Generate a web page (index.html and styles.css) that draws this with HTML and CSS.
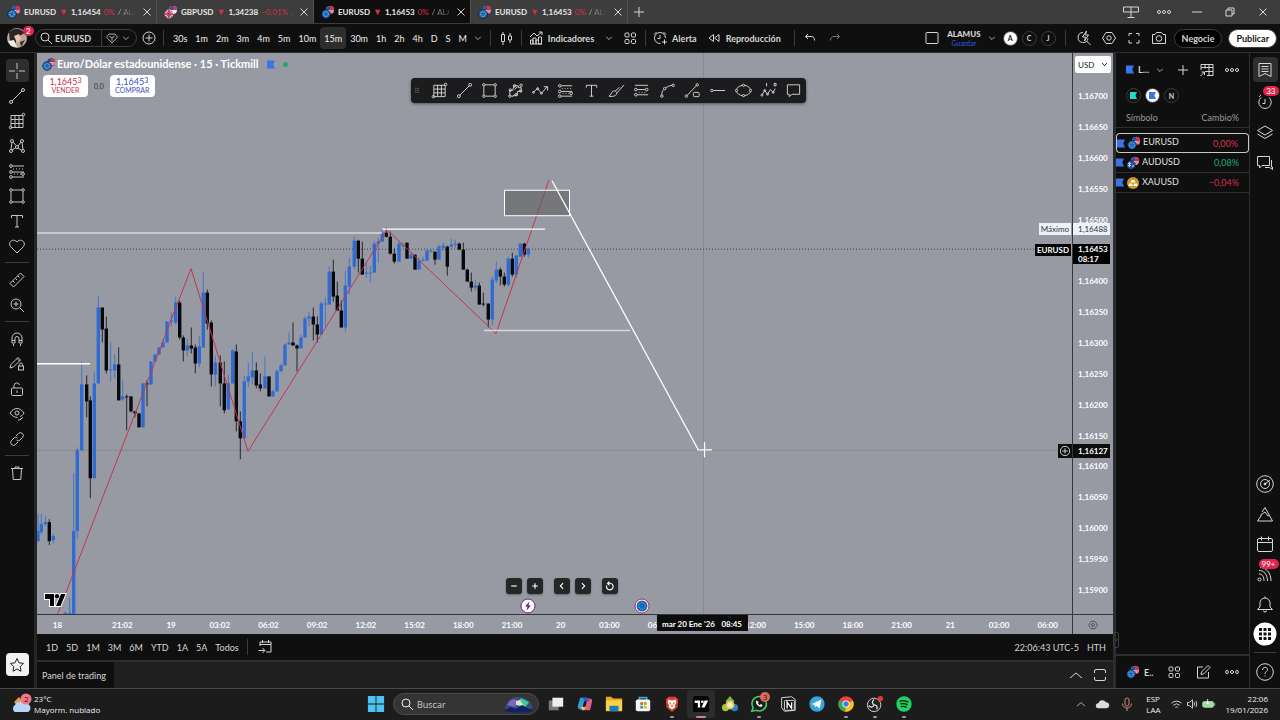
FILE: index.html
```html
<!DOCTYPE html>
<html lang="es">
<head>
    <meta charset="UTF-8">
    <meta name="viewport" content="width=device-width, initial-scale=1.0">
    <title>EURUSD 1,16453</title>
    <link rel="stylesheet" href="styles.css">
</head>
<body>
    <!-- Icon sprite -->
    <svg class="sprite" aria-hidden="true">
        <symbol id="pair-eu" viewBox="0 0 14 14"><circle cx="9" cy="5" r="4" fill="#e8e8f0"/><path d="M9 1a4 4 0 0 1 4 4H9zM8 7h5M7 8.5h5" fill="#c8374f" stroke="#c8374f" stroke-width="1"/><path d="M5 5a4 4 0 0 1 4-4v4z" fill="#2d4fa5"/><circle cx="5" cy="9" r="4.4" fill="#1c66b4" stroke="#0f0f0f" stroke-width=".5"/><circle cx="5" cy="9" r="2.4" fill="none" stroke="#9fd0ee" stroke-width="1" stroke-dasharray="1 .9"/></symbol>
        <symbol id="pair-gb" viewBox="0 0 14 14"><circle cx="9" cy="5" r="4" fill="#e8e8f0"/><path d="M9 1a4 4 0 0 1 4 4H9z" fill="#c8374f"/><path d="M5 5a4 4 0 0 1 4-4v4z" fill="#2d4fa5"/><circle cx="5" cy="9" r="4.4" fill="#e3b7c4"/><path d="M5 5v8M1 9h8" stroke="#c9304d" stroke-width="1.6"/><path d="M2 6l6 6M8 6l-6 6" stroke="#a23a60" stroke-width=".8"/></symbol>
        <symbol id="pair-au" viewBox="0 0 14 14"><circle cx="9" cy="5" r="4" fill="#e8e8f0"/><path d="M9 1a4 4 0 0 1 4 4H9zM8 7h5" fill="#c8374f" stroke="#c8374f"/><path d="M5 5a4 4 0 0 1 4-4v4z" fill="#2d4fa5"/><circle cx="5" cy="9" r="4.4" fill="#2b529b" stroke="#0f0f0f" stroke-width=".5"/><path d="M2 7l3 3M5 7l-3 3M3.500 6v5" stroke="#eee" stroke-width=".8"/><circle cx="7" cy="10" r=".8" fill="#fff"/></symbol>
        <symbol id="gold" viewBox="0 0 14 14"><circle cx="7" cy="7" r="6" fill="#c9972b"/><path d="M5.500 4h3l1 2.500h-5zM3 7.500h3l.8 2.500H2.200zM8 7.500h3l.8 2.500H7.200z" fill="#fff6dc"/></symbol>
        <symbol id="flag" viewBox="0 0 9 9"><path d="M0 0h9L7 4.500 9 9H0z" fill="currentColor" stroke="none"/></symbol>
        <symbol id="x" viewBox="0 0 18 18"><path d="M5.500 5.500l7 7M12.500 5.500l-7 7"/></symbol>
        <symbol id="plus" viewBox="0 0 18 18"><path d="M9 4v10M4 9h10"/></symbol>
        <symbol id="minus" viewBox="0 0 18 18"><path d="M4 9h10"/></symbol>
        <symbol id="down" viewBox="0 0 18 18"><path d="M5.500 7.500L9 11l3.500-3.500"/></symbol>
        <symbol id="up" viewBox="0 0 18 18"><path d="M3 12l6-5 6 5"/></symbol>
        <symbol id="left" viewBox="0 0 18 18"><path d="M11 4L6 9l5 5"/></symbol>
        <symbol id="right" viewBox="0 0 18 18"><path d="M7 4l5 5-5 5"/></symbol>
        <symbol id="search" viewBox="0 0 18 18"><circle cx="8" cy="8" r="4"/><path d="M11 11l4 4"/></symbol>
        <symbol id="gem" viewBox="0 0 18 18"><path d="M5 4h8l3 4-7 7.500L2 8zM5.500 7.500H7.500L9 9.500l1.500-2h2M9 9.500V13"/></symbol>
        <symbol id="circle-plus" viewBox="0 0 18 18"><circle cx="9" cy="9" r="6"/><path d="M9 5.500v7M5.500 9h7"/></symbol>
        <symbol id="candles" viewBox="0 0 18 18"><path d="M4.500 5.500h3v7h-3zM6 3v2.500M6 12.500V16M11.500 7h3v4h-3zM13 4v3M13 11v3"/></symbol>
        <symbol id="indicators" viewBox="0 0 18 18"><path d="M3.500 15v-4h2.500v4M6 15V9h3v6M9 15v-4h2.500v4M11.500 15V8h3v7zM3 15h12M3 8l4-4 3 3 5-4M12 3h3v3"/></symbol>
        <symbol id="grid" viewBox="0 0 18 18"><rect x="4" y="4" width="4" height="4" rx="1"/><rect x="10.500" y="4" width="4" height="4" rx="1"/><rect x="4" y="10.500" width="4" height="4" rx="1"/><rect x="10.500" y="10.500" width="4" height="4" rx="1"/></symbol>
        <symbol id="alarm" viewBox="0 0 18 18"><path d="M9.500 14.500A5.500 5.500 0 1 1 14.500 9M9 6v3.500H6.500M3 5.500L5.500 3M12.500 3L15 5.500M13.500 10.500v5M11 13h5"/></symbol>
        <symbol id="replay" viewBox="0 0 18 18"><path d="M8.500 5.500v7L4 9zM14 5.500v7L9.500 9z"/></symbol>
        <symbol id="undo" viewBox="0 0 18 18"><path d="M7 5L4.500 7.500 7 10M4.500 7.500H10c2.500 0 3.500 1.500 3.500 4"/></symbol>
        <symbol id="redo" viewBox="0 0 18 18"><path d="M11 5l2.500 2.500L11 10M13.500 7.500H8c-2.500 0-3.500 1.500-3.500 4"/></symbol>
        <symbol id="square" viewBox="0 0 18 18"><rect x="3" y="3.500" width="12" height="11" rx="1"/></symbol>
        <symbol id="quick" viewBox="0 0 18 18"><path d="M8 3.500a5 5 0 1 0 5 6M11.500 12l4 4M11.500 2L7.500 8h3l-1 4 4-6h-3z"/></symbol>
        <symbol id="hex" viewBox="0 0 18 18"><path d="M6 3.500h6l3.500 5.500-3.500 5.500H6L2.500 9z"/><circle cx="9" cy="9" r="2.200"/></symbol>
        <symbol id="full" viewBox="0 0 18 18"><path d="M4 7V4.500h3M11 4.500h3V7M14 11v3h-3M7 14H4v-3"/></symbol>
        <symbol id="camera" viewBox="0 0 18 18"><path d="M2.500 5.500H5L6.500 3.500h5L13 5.500h2.500v9h-13z"/><circle cx="9" cy="9.500" r="2.800"/></symbol>
        <symbol id="cross" viewBox="0 0 18 18"><path d="M9 1v6M9 11v6M1 9h6M11 9h6M8.700 9h.6"/></symbol>
        <symbol id="trend" viewBox="0 0 18 18"><circle cx="3" cy="15" r="1.500"/><circle cx="15" cy="3" r="1.500"/><path d="M4 14L14 4"/></symbol>
        <symbol id="gann" viewBox="0 0 18 18"><path d="M3 3.500h12v12H3zM7 3v12M11 3v12M3 7.500h12M3 11.500h12"/><circle cx="2.500" cy="15.500" r="1.300"/><circle cx="15.500" cy="2.500" r="1.300"/></symbol>
        <symbol id="pattern" viewBox="0 0 18 18"><circle cx="4" cy="4" r="1.500"/><circle cx="3" cy="14" r="1.500"/><circle cx="9" cy="10" r="1.500"/><circle cx="14" cy="4" r="1.500"/><circle cx="15" cy="14" r="1.500"/><path d="M4 5.500L3 12.500M5 5l3.500 4M10 9l3-4M14 5.500l1 7M4 13l4-2.500M10 11l4 2.500"/></symbol>
        <symbol id="fib" viewBox="0 0 18 18"><circle cx="3" cy="4" r="1.400"/><circle cx="3" cy="10" r="1.400"/><circle cx="3" cy="15" r="1.400"/><circle cx="15" cy="12" r="1.400"/><path d="M4.500 4H16M4.500 10H16M4.500 15H16"/><path d="M5 7h10M6 12h7" stroke-dasharray="1 2"/></symbol>
        <symbol id="extension" viewBox="0 0 18 18"><circle cx="3" cy="8" r="1.400"/><circle cx="14.500" cy="8" r="1.400"/><circle cx="3" cy="13.500" r="1.400"/><path d="M2 3.500h14M4.500 8H13M4.500 13.500H16"/><path d="M6 11h8" stroke-dasharray="1 2"/></symbol>
        <symbol id="rect" viewBox="0 0 18 18"><path d="M3 4.500v9M15 4.500v9M4.500 3h9M4.500 15h9"/><circle cx="3" cy="3" r="1.300"/><circle cx="15" cy="3" r="1.300"/><circle cx="3" cy="15" r="1.300"/><circle cx="15" cy="15" r="1.300"/></symbol>
        <symbol id="text" viewBox="0 0 18 18"><path d="M3.500 6V3.500h11V6M9 3.500V15M7 15h4"/></symbol>
        <symbol id="heart" viewBox="0 0 18 18"><path d="M9 16L2.500 9.500c-3-4 2.500-9 6.500-4.500 4-4.500 9.500.5 6.500 4.500z"/></symbol>
        <symbol id="ruler" viewBox="0 0 18 18"><path d="M2 12.500L12.500 2 16 5.500 5.500 16zM5 10l1.500 1.500M7.500 7.500L9 9M10 5l1.500 1.500"/></symbol>
        <symbol id="zoom-in" viewBox="0 0 18 18"><circle cx="8" cy="8" r="5"/><path d="M12 12l4 4M8 5.500v5M5.500 8h5"/></symbol>
        <symbol id="magnet" viewBox="0 0 18 18"><path d="M4 13V8a5 5 0 0 1 10 0v5h-3V8.500a2 2 0 0 0-4 0V13zM4 10.500h3M11 10.500h3M5.500 14v2M12.500 14v2"/></symbol>
        <symbol id="pen-lock" viewBox="0 0 18 18"><path d="M2 13L3 9.500 10 2.500l2.500 2.500-7 7zM9 3.500L11.500 6"/><rect x="10.500" y="11" width="5" height="4"/><path d="M11.500 11V9.500a1.500 1.500 0 0 1 3 0V11"/></symbol>
        <symbol id="lock" viewBox="0 0 18 18"><rect x="3.500" y="8" width="11" height="7.500" rx="1"/><path d="M6 8V5.500a2.800 2.800 0 0 1 5.500-.5M9 10.500v2.500"/></symbol>
        <symbol id="eye" viewBox="0 0 18 18"><path d="M2 8c4-6 10-6 14 0-1 2-2.500 3-4 3.500M2 8c2 3 5 4.500 7.500 4.500"/><circle cx="9" cy="8" r="2"/><path d="M10 15c2 .5 3-1.500 5-2.500M12 15l2-2"/></symbol>
        <symbol id="link" viewBox="0 0 18 18"><path d="M8 6l2.500-2.500a2.800 2.800 0 0 1 4 4L12 10c-1 1-2.500 1-3.500 0M10 12l-2.500 2.500a2.800 2.800 0 0 1-4-4L6 8c1-1 2.500-1 3.500 0"/></symbol>
        <symbol id="trash" viewBox="0 0 18 18"><path d="M3 4.500h12M7 4.500V3h4v1.500M4.500 4.500l.7 11h7.600l.7-11"/></symbol>
        <symbol id="star" viewBox="0 0 18 18"><path d="M9 2.500l2 4.300 4.500.6-3.300 3.200.8 4.700L9 13l-4 2.300.8-4.700-3.300-3.200 4.500-.6z"/></symbol>
        <symbol id="nodes" viewBox="0 0 18 18"><path d="M3 14.500V9h3l1.500-5H12v2h3v4h-4v4H7v1H4.500M8 8l3-3"/><circle cx="3" cy="15" r="1.300"/><circle cx="3.500" cy="8.500" r="1.300"/><circle cx="8" cy="4" r="1.300"/><circle cx="15" cy="3.500" r="1.300"/><circle cx="14.500" cy="9.500" r="1.300"/><circle cx="9.500" cy="13.500" r="1.300"/></symbol>
        <symbol id="zigzag" viewBox="0 0 18 18"><path d="M1 11l5-4 4 5 6-7M12.500 5H16.500V9"/><circle cx="1.500" cy="11" r="1"/><circle cx="6" cy="7" r="1"/><circle cx="10" cy="12" r="1"/></symbol>
        <symbol id="brush" viewBox="0 0 18 18"><path d="M1 15c2 0 2-4 4.500-5.500 2-.8 4.500 1.500 3.500 3.500-1 2-5 3-8 2zM8 9.500L12 5.500M9.500 11.500L17 3"/></symbol>
        <symbol id="curve" viewBox="0 0 18 18"><path d="M3 14c0-3 .5-4.500 2-6M7 6.500c2-2 4-2.500 7-3"/><circle cx="3" cy="15" r="1.300"/><circle cx="6" cy="7" r="1.300"/><circle cx="15" cy="3.500" r="1.300"/></symbol>
        <symbol id="trend-lock" viewBox="0 0 18 18"><circle cx="2.500" cy="15" r="1.300"/><circle cx="14" cy="3" r="1.300"/><path d="M3.500 14l9.500-10"/><rect x="10" y="11" width="6" height="4.500" rx="1"/></symbol>
        <symbol id="ray" viewBox="0 0 18 18"><circle cx="3" cy="9" r="1.300"/><path d="M4.500 9H17"/></symbol>
        <symbol id="ellipse" viewBox="0 0 18 18"><ellipse cx="9" cy="9" rx="7.500" ry="5.500"/><circle cx="1.500" cy="9" r="1.200" fill="#1c1c1e"/><circle cx="16.500" cy="9" r="1.200" fill="#1c1c1e"/><circle cx="9" cy="3.500" r="1.200" fill="#1c1c1e"/><circle cx="9" cy="14.500" r="1.200" fill="#1c1c1e"/></symbol>
        <symbol id="elliott" viewBox="0 0 18 18"><path d="M2 14l3-5 3 4 3-5 3 3 2-4M7 1v3.500M15 1.500v2.500h2v-2.500z"/><circle cx="2" cy="14" r="1"/><circle cx="5" cy="9" r="1"/><circle cx="8" cy="13" r="1"/><circle cx="14" cy="11" r="1"/></symbol>
        <symbol id="note" viewBox="0 0 18 18"><path d="M2.500 3h13v10H7.500L4.500 15.500V13h-2z"/></symbol>
        <symbol id="dots" viewBox="0 0 18 18"><circle cx="4" cy="9" r="1.500"/><circle cx="9" cy="9" r="1.500"/><circle cx="14" cy="9" r="1.500"/></symbol>
        <symbol id="table" viewBox="0 0 18 18"><path d="M3 9V3.500h12v11H9M3 6.500h12M7 3.500v4M11 3.500v11M7 10.500h8M2.500 15l4-4M3.500 11h3v3"/></symbol>
        <symbol id="watch" viewBox="0 0 18 18"><path d="M3 2.500h12v13l-6-3-6 3zM5.500 5.500h7M5.500 8h7M5.500 10.500h7"/></symbol>
        <symbol id="clock" viewBox="0 0 18 18"><path d="M13 5.500A6.200 6.200 0 1 1 5 5.500M9 7v4.500H6.500M3 5l2-2"/></symbol>
        <symbol id="layers" viewBox="0 0 18 18"><path d="M9 3l7.500 4.500-7.500 4.500-7.500-4.500zM1.500 11l7.500 4.500 7.500-4.500"/></symbol>
        <symbol id="chat" viewBox="0 0 18 18"><path d="M1.500 2.500h12v9H6L3.500 14v-2.500h-2zM15.500 6v7h1v2.500L13.500 13.500H9"/></symbol>
        <symbol id="target" viewBox="0 0 18 18"><circle cx="9" cy="9" r="8.300"/><circle cx="9" cy="9" r="4.500"/><path d="M9 9l5-4"/><circle cx="9" cy="9" r="1" fill="currentColor"/></symbol>
        <symbol id="peak" viewBox="0 0 18 18"><path d="M1.500 16h15L9 2.500 6 7M1.500 16l4-6M4.500 10l4.500-3 3 4 1.500-.5"/></symbol>
        <symbol id="calendar" viewBox="0 0 18 18"><rect x="1.500" y="3.500" width="15" height="13" rx="1.500"/><path d="M1.500 7.500h15M5.500 1.500v4M12.500 1.500v4"/></symbol>
        <symbol id="feed" viewBox="0 0 18 18"><path d="M3 9c3 0 5 2 5 7M3 5.500c5 0 8.500 4 8.500 10.500M4 2.500c6 0 11 5 11 13.500"/><circle cx="3.500" cy="14.500" r="1.500"/></symbol>
        <symbol id="bell" viewBox="0 0 18 18"><path d="M1.500 14.500h15l-2.500-2.500V8A5 5 0 0 0 4 8v4zM7.500 15.500a1.500 1.500 0 0 0 3 0M9 1.500V3"/></symbol>
        <symbol id="help" viewBox="0 0 18 18"><circle cx="9" cy="9" r="8.300"/><path d="M6.500 7c0-3.500 5-3.500 5-.5C11.500 8.500 9 8.500 9 11M9 12.500v1"/></symbol>
        <symbol id="goto" viewBox="0 0 18 18"><path d="M4 8V4h11v10H10M4 6.500h11M6.500 2v3M12.500 2v3M2.500 12.500h6M6.500 10l2.500 2.500L6.500 15"/></symbol>
        <symbol id="edit" viewBox="0 0 18 18"><path d="M9 4H3.500v11h11V9M7 11.500l.5-2.500L14 2.500 16 4.500 9.500 11z"/></symbol>
        <symbol id="maxi" viewBox="0 0 18 18"><path d="M3.500 7V5a1.500 1.500 0 0 1 1.500-1.500h8A1.500 1.500 0 0 1 14.500 5v2M14.500 11v2a1.500 1.500 0 0 1-1.500 1.500H5A1.500 1.500 0 0 1 3.500 13v-2"/></symbol>
        <symbol id="reset" viewBox="0 0 18 18"><path d="M3 8a6 6 0 1 0 6-4H5M8 1L4.500 4.500 8 8"/></symbol>
        <symbol id="windows" viewBox="0 0 18 18"><path d="M1.500 4h15v5h-15zM9 4v11M5.500 14.500h7"/></symbol>
        <symbol id="restore" viewBox="0 0 18 18"><path d="M5 7h6v6H5zM7 7V5h6v6h-2"/></symbol>
        <symbol id="tv" viewBox="0 0 22 14"><path d="M1 1h9v12H6V6H1z" fill="currentColor" stroke="none"/><circle cx="13" cy="3.200" r="2.200" fill="currentColor" stroke="none"/><path d="M17 1h4.500L16.500 13H12z" fill="currentColor" stroke="none"/></symbol>
    </svg>

    <!-- Window tabs -->
    <header class="tabs">
        <a class="tab" href="#"><svg class="pair"><use href="#pair-eu"/></svg><b>EURUSD</b><i>▼</i><span>1,16454</span><em>0%</em><small>/ ALAMUS</small><svg class="ico"><use href="#x"/></svg></a>
        <a class="tab" href="#"><svg class="pair"><use href="#pair-gb"/></svg><b>GBPUSD</b><i>▼</i><span>1,34238</span><em>−0.01%</em><small>/</small><svg class="ico"><use href="#x"/></svg></a>
        <a class="tab active" href="#"><svg class="pair"><use href="#pair-eu"/></svg><b>EURUSD</b><i>▼</i><span>1,16453</span><em>0%</em><small>/ ALAMUS</small><svg class="ico"><use href="#x"/></svg></a>
        <a class="tab" href="#"><svg class="pair"><use href="#pair-eu"/></svg><b>EURUSD</b><i>▼</i><span>1,16453</span><em>0%</em><small>/ ALAMUS</small><svg class="ico"><use href="#x"/></svg></a>
        <button class="new-tab" aria-label="Nueva pestaña"><svg class="ico"><use href="#plus"/></svg></button>
        <div class="window-controls">
            <button aria-label="Ventanas"><svg class="ico"><use href="#windows"/></svg></button>
            <button aria-label="Más"><svg class="ico"><use href="#dots"/></svg></button>
            <button aria-label="Minimizar"><svg class="ico"><use href="#minus"/></svg></button>
            <button aria-label="Restaurar"><svg class="ico"><use href="#restore"/></svg></button>
            <button aria-label="Cerrar"><svg class="ico"><use href="#x"/></svg></button>
        </div>
    </header>

    <!-- Top toolbar -->
    <nav class="toolbar">
        <button class="avatar" aria-label="Perfil">
            <svg viewBox="0 0 20 20"><circle cx="10" cy="10" r="10" fill="#b9a79b"/><path d="M2 4Q10-3 18 5L12 8 8 16 3 14z" fill="#2d2320"/><path d="M7 8l5-2 2 5-4 4z" fill="#e6c6b0"/><path d="M1 13l6-1 3 7-6-1z" fill="#eee"/><path d="M13 14l5-2-4 7z" fill="#3d2b26"/></svg>
            <span class="badge">2</span>
        </button>
        <div class="symbol-search">
            <button class="symbol"><svg class="ico"><use href="#search"/></svg>EURUSD</button>
            <button class="gem" aria-label="Favoritos"><svg class="ico"><use href="#gem"/></svg><svg class="ico slim"><use href="#down"/></svg></button>
        </div>
        <button aria-label="Comparar"><svg class="ico"><use href="#circle-plus"/></svg></button>
        <span class="sep"></span>
        <div class="frames">
            <button>30s</button><button>1m</button><button>2m</button><button>3m</button><button>4m</button><button>5m</button><button>10m</button><button class="on">15m</button><button>30m</button><button>1h</button><button>2h</button><button>4h</button><button>D</button><button>S</button><button>M</button>
        </div>
        <button aria-label="Intervalos"><svg class="ico slim"><use href="#down"/></svg></button>
        <span class="sep"></span>
        <button class="pad" aria-label="Velas"><svg class="ico"><use href="#candles"/></svg></button>
        <span class="sep"></span>
        <button class="labelled"><svg class="ico"><use href="#indicators"/></svg>Indicadores</button>
        <button class="arrow" aria-label="Favoritos"><svg class="ico slim"><use href="#down"/></svg></button>
        <button class="pad" aria-label="Plantillas"><svg class="ico"><use href="#grid"/></svg></button>
        <span class="sep"></span>
        <button class="labelled"><svg class="ico"><use href="#alarm"/></svg>Alerta</button>
        <button class="labelled"><svg class="ico"><use href="#replay"/></svg>Reproducción</button>
        <span class="sep"></span>
        <button class="pad" aria-label="Deshacer"><svg class="ico"><use href="#undo"/></svg></button>
        <button class="dim" aria-label="Rehacer"><svg class="ico"><use href="#redo"/></svg></button>
        <div class="toolbar-end">
            <button aria-label="Diseño"><svg class="ico"><use href="#square"/></svg></button>
            <div class="layout-name"><b>ALAMUS</b><a href="#">Guardar</a></div>
            <button aria-label="Diseños"><svg class="ico slim"><use href="#down"/></svg></button>
            <button class="letter white">A</button>
            <button class="letter">C</button>
            <button class="letter">J</button>
            <span class="sep"></span>
            <div class="tools">
                <button aria-label="Búsqueda rápida"><svg class="ico"><use href="#quick"/></svg></button>
                <button aria-label="Configuración"><svg class="ico"><use href="#hex"/></svg></button>
                <button aria-label="Pantalla completa"><svg class="ico"><use href="#full"/></svg></button>
                <button aria-label="Captura"><svg class="ico"><use href="#camera"/></svg></button>
            </div>
            <button class="pill">Negocie</button>
            <button class="pill light">Publicar</button>
        </div>
    </nav>

    <main class="workspace">
        <!-- Drawing tools -->
        <aside class="draw-tools">
            <button class="on" aria-label="Cruz"><svg class="ico"><use href="#cross"/></svg></button>
            <button aria-label="Línea"><svg class="ico"><use href="#trend"/></svg></button>
            <button aria-label="Gann"><svg class="ico"><use href="#gann"/></svg></button>
            <button aria-label="Patrones"><svg class="ico"><use href="#pattern"/></svg></button>
            <button aria-label="Fibonacci"><svg class="ico"><use href="#fib"/></svg></button>
            <button aria-label="Rectángulo"><svg class="ico"><use href="#rect"/></svg></button>
            <button aria-label="Texto"><svg class="ico"><use href="#text"/></svg></button>
            <button aria-label="Iconos"><svg class="ico"><use href="#heart"/></svg></button>
            <hr>
            <button aria-label="Regla"><svg class="ico"><use href="#ruler"/></svg></button>
            <button aria-label="Acercar"><svg class="ico"><use href="#zoom-in"/></svg></button>
            <hr>
            <button aria-label="Imán"><svg class="ico"><use href="#magnet"/></svg></button>
            <button aria-label="Modo dibujo"><svg class="ico"><use href="#pen-lock"/></svg></button>
            <button aria-label="Bloquear"><svg class="ico"><use href="#lock"/></svg></button>
            <button aria-label="Ocultar"><svg class="ico"><use href="#eye"/></svg></button>
            <button aria-label="Vincular"><svg class="ico"><use href="#link"/></svg></button>
            <hr>
            <button aria-label="Eliminar"><svg class="ico"><use href="#trash"/></svg></button>
            <button class="fav" aria-label="Favoritos"><svg class="ico"><use href="#star"/></svg></button>
        </aside>

        <section class="center">
            <div class="chart">
                <div class="plot">
                    <svg class="series" viewBox="37 53 1035 562" preserveAspectRatio="none">
                        <path d="M703.500 53v562M37 451h1035" stroke="#868a94" stroke-width="1"/>
                        <path d="M37 249.500h1035" stroke="#3a3c42" stroke-width="1" stroke-dasharray="1 2"/>
                        <g id="candleGroup"></g>
                        <path d="M57.700 615L191 269l57 183L387 230l109 104 53-154" fill="none" stroke="#c4344f" stroke-width="1"/>
                        <path d="M37 233.300h345M484 331h146" stroke="#d5d7dc" stroke-width="1.700"/>
                        <path d="M37 364.300h53M382 229.500h163" stroke="#fff" stroke-width="1.300"/>
                        <rect x="504.500" y="190.500" width="65" height="25.500" fill="#606060" fill-opacity=".6" stroke="#fff"/>
                        <path d="M552 181l146 269" stroke="#fff" stroke-width="1.300"/>
                        <path d="M704.500 443v15M697 450.500h15" stroke="#fff" stroke-width="1.300"/>
                    </svg>

                    <div class="legend">
                        <h1><svg class="pair"><use href="#pair-eu"/></svg>Euro/Dólar estadounidense · 15 · Tickmill</h1>
                        <svg class="flag"><use href="#flag"/></svg>
                        <span class="status"></span>
                    </div>
                    <div class="quotes">
                        <button class="sell"><b>1,1645<sup>3</sup></b>VENDER</button>
                        <span>0,0</span>
                        <button class="buy"><b>1,1645<sup>3</sup></b>COMPRAR</button>
                    </div>

                    <div class="float-bar">
                        <span class="grip">⠿</span>
                        <button aria-label="Gann"><svg class="ico"><use href="#gann"/></svg></button>
                        <button aria-label="Línea"><svg class="ico"><use href="#trend"/></svg></button>
                        <button aria-label="Rectángulo"><svg class="ico"><use href="#rect"/></svg></button>
                        <button aria-label="Trazado"><svg class="ico"><use href="#nodes"/></svg></button>
                        <button aria-label="Zigzag"><svg class="ico"><use href="#zigzag"/></svg></button>
                        <button aria-label="Fibonacci"><svg class="ico"><use href="#fib"/></svg></button>
                        <button aria-label="Texto"><svg class="ico"><use href="#text"/></svg></button>
                        <button aria-label="Pincel"><svg class="ico"><use href="#brush"/></svg></button>
                        <button aria-label="Extensión"><svg class="ico"><use href="#extension"/></svg></button>
                        <button aria-label="Curva"><svg class="ico"><use href="#curve"/></svg></button>
                        <button aria-label="Línea con datos"><svg class="ico"><use href="#trend-lock"/></svg></button>
                        <button aria-label="Rayo"><svg class="ico"><use href="#ray"/></svg></button>
                        <button aria-label="Elipse"><svg class="ico"><use href="#ellipse"/></svg></button>
                        <button aria-label="Elliott"><svg class="ico"><use href="#elliott"/></svg></button>
                        <button aria-label="Nota"><svg class="ico"><use href="#note"/></svg></button>
                    </div>

                    <div class="nav-buttons">
                        <button aria-label="Alejar"><svg class="ico"><use href="#minus"/></svg></button>
                        <button aria-label="Acercar"><svg class="ico"><use href="#plus"/></svg></button>
                        <button class="gap" aria-label="Izquierda"><svg class="ico"><use href="#left"/></svg></button>
                        <button aria-label="Derecha"><svg class="ico"><use href="#right"/></svg></button>
                        <button class="gap" aria-label="Restablecer"><svg class="ico"><use href="#reset"/></svg></button>
                    </div>
                    <svg class="event spark" viewBox="0 0 16 16"><circle cx="8" cy="8" r="7" fill="#fff" stroke="#6a2080"/><path d="M9.500 3.500L5 8.500h2.500l-1 4L11 7.500H8.500z" fill="#6a2080"/></svg>
                    <svg class="event euro" viewBox="0 0 16 16"><circle cx="8" cy="8" r="7" fill="#fff" stroke="#b02a58"/><circle cx="8" cy="8" r="5.500" fill="#1769b5"/><circle cx="8" cy="8" r="3.300" fill="none" stroke="#6fbbe8" stroke-dasharray="1 1"/></svg>
                    <svg class="tv-mark" viewBox="0 0 22 14"><path d="M1 1h9v12H6V6H1zM17 1h4.500L16.500 13H12zM11 3a2 2 0 1 0 4 0 2 2 0 0 0-4 0" fill="#fff" stroke="#fff" stroke-width="2"/><use href="#tv"/></svg>

                    <div class="tag name high">Máximo</div>
                    <div class="tag name last">EURUSD</div>
                    <div class="tag name cursor"><svg class="ico"><use href="#circle-plus"/></svg></div>
                </div>
                <div class="price-axis">
                    <select aria-label="Moneda"><option>USD</option></select>
                    <span>1,16700</span><span>1,16650</span><span>1,16600</span><span>1,16550</span><span>1,16500</span><span></span><span>1,16400</span><span>1,16350</span><span>1,16300</span><span>1,16250</span><span>1,16200</span><span>1,16150</span><span>1,16100</span><span>1,16050</span><span>1,16000</span><span>1,15950</span><span>1,15900</span>
                    <div class="tag high">1,16488</div>
                    <div class="tag last">1,16453<small>08:17</small></div>
                    <div class="tag cursor">1,16127</div>
                </div>
                <div class="time-axis">
                    <span class="first">18</span><span>21:02</span><span>19</span><span>03:02</span><span>06:02</span><span>09:02</span><span>12:02</span><span>15:02</span><span>18:00</span><span>21:00</span><span>20</span><span>03:00</span><span>06:00</span><span></span><span>12:00</span><span>15:00</span><span>18:00</span><span>21:00</span><span>21</span><span>03:00</span><span>06:00</span>
                    <div class="date-tag"><span>mar 20 Ene '26</span><span>08:45</span></div>
                </div>
                <button class="axis-settings" aria-label="Escala"><svg class="ico"><use href="#hex"/></svg></button>
            </div>

            <div class="range-bar">
                <button>1D</button><button>5D</button><button>1M</button><button>3M</button><button>6M</button><button>YTD</button><button>1A</button><button>5A</button><button>Todos</button>
                <span class="sep"></span>
                <button aria-label="Ir a"><svg class="ico"><use href="#goto"/></svg></button>
                <button class="clock">22:06:43 UTC-5</button>
                <button>HTH</button>
            </div>
            <div class="panel-bar">
                <button class="panel-tab">Panel de trading</button>
                <button class="panel-icon" aria-label="Abrir"><svg class="ico"><use href="#up"/></svg></button>
                <button aria-label="Maximizar"><svg class="ico"><use href="#maxi"/></svg></button>
            </div>
        </section>

        <!-- Watchlist -->
        <section class="watchlist">
            <div class="watch-head">
                <button><svg class="flag"><use href="#flag"/></svg>L...<svg class="ico slim"><use href="#down"/></svg></button>
                <button aria-label="Añadir"><svg class="ico"><use href="#plus"/></svg></button>
                <button aria-label="Tabla"><svg class="ico"><use href="#table"/></svg></button>
                <button aria-label="Más"><svg class="ico"><use href="#dots"/></svg></button>
            </div>
            <div class="watch-lists">
                <button class="letter teal" aria-label="Verde"><svg class="flag"><use href="#flag"/></svg></button>
                <button class="letter white" aria-label="Azul"><svg class="flag"><use href="#flag"/></svg></button>
                <button class="letter">N</button>
            </div>
            <table>
                <thead>
                    <tr><th>Símbolo</th><th>Cambio%</th></tr>
                </thead>
                <tbody>
                    <tr class="selected"><td><svg class="flag"><use href="#flag"/></svg><svg class="pair"><use href="#pair-eu"/></svg>EURUSD</td><td class="neg">0,00%</td></tr>
                    <tr><td><svg class="flag"><use href="#flag"/></svg><svg class="pair"><use href="#pair-au"/></svg>AUDUSD</td><td class="pos">0,08%</td></tr>
                    <tr><td><svg class="flag"><use href="#flag"/></svg><svg class="pair"><use href="#gold"/></svg>XAUUSD</td><td class="neg">−0,04%</td></tr>
                </tbody>
            </table>
            <div class="watch-foot">
                <button><svg class="pair"><use href="#pair-eu"/></svg>E..</button>
                <button aria-label="Paneles"><svg class="ico"><use href="#grid"/></svg></button>
                <button aria-label="Notas"><svg class="ico"><use href="#edit"/></svg></button>
                <button aria-label="Más"><svg class="ico"><use href="#dots"/></svg></button>
            </div>
            <button class="collapse" aria-label="Contraer"><svg class="ico"><use href="#right"/></svg></button>
        </section>

        <!-- Right rail -->
        <aside class="rail">
            <button class="on" aria-label="Lista"><svg class="ico"><use href="#watch"/></svg></button>
            <button aria-label="Alertas"><svg class="ico"><use href="#clock"/></svg><span class="badge">33</span></button>
            <button aria-label="Capas"><svg class="ico"><use href="#layers"/></svg></button>
            <button aria-label="Chats"><svg class="ico"><use href="#chat"/></svg></button>
            <div class="rail-low">
                <button aria-label="Filtros"><svg class="ico"><use href="#target"/></svg></button>
                <button aria-label="Pine"><svg class="ico"><use href="#peak"/></svg></button>
                <button aria-label="Calendario"><svg class="ico"><use href="#calendar"/></svg></button>
                <button aria-label="Noticias"><svg class="ico"><use href="#feed"/></svg><span class="badge">99+</span></button>
                <button aria-label="Avisos"><svg class="ico"><use href="#bell"/></svg></button>
                <button aria-label="Productos"><svg class="apps" viewBox="0 0 24 24"><circle cx="12" cy="12" r="11.500" fill="#fff"/><path d="M6 6h3v3H6zM10.500 6h3v3h-3zM15 6h3v3h-3zM6 10.500h3v3H6zM10.500 10.500h3v3h-3zM15 10.500h3v3h-3zM6 15h3v3H6zM10.500 15h3v3h-3zM15 15h3v3h-3z" fill="#111"/></svg></button>
                <hr>
                <button aria-label="Ayuda"><svg class="ico"><use href="#help"/></svg></button>
            </div>
        </aside>
    </main>

    <!-- Taskbar -->
    <footer class="taskbar">
        <div class="weather">
            <svg viewBox="0 0 22 22"><path d="M3 9l5-5 5 6-6 4z" fill="#e09a4a"/><path d="M4 19a4 4 0 0 1 0-7 5 5 0 0 1 9-1 4 4 0 0 1 4 8z" fill="#b9d4f4"/><circle cx="15" cy="6" r="5.500" fill="#f0788a"/></svg>
            <span class="weather-count">2</span>
            <div><span>23°C</span><span>Mayorm. nublado</span></div>
        </div>
        <div class="apps-row">
            <button aria-label="Inicio"><svg viewBox="0 0 20 20"><path d="M1 1h8.500v8.500H1zM10.500 1H19v8.500h-8.500zM1 10.500h8.500V19H1zM10.500 10.500H19V19h-8.500z" fill="#4cc2f5"/></svg></button>
            <label class="search-box">
                <svg class="ico"><use href="#search"/></svg>
                <input type="search" placeholder="Buscar" aria-label="Buscar">
                <svg class="aurora" viewBox="0 0 30 18"><path d="M1 13Q5 1 15 2t14 10l-5 4H5z" fill="#31507c"/><path d="M3 10Q8 1 14 6l-3 6z" fill="#8263c4"/><path d="M13 10l4-7 8 4-4 6z" fill="#43c89a"/><path d="M12 6l4-1 4 6-8-1z" fill="#e8dcc8"/><path d="M0 16l6-4 6 2 6-4 11 6q-13 3-29 0z" fill="#10206a"/></svg>
            </label>
            <button aria-label="Vista de tareas"><svg viewBox="0 0 20 20"><path d="M2 6h11v11H2z" fill="#777"/><path d="M6 3h12v10H6z" fill="#eee"/></svg></button>
            <button aria-label="Copilot"><svg viewBox="0 0 20 20"><path d="M5 3h7L8 16H5c-4 0-3-4-2-7s1-6 2-6z" fill="#2c9be0"/><path d="M15 17H8l4-13h3c4 0 3 4 2 7s-1 6-2 6z" fill="#e0607a"/><path d="M8 3h5l2 4H9z" fill="#3a55d0"/><path d="M5 13h6l-2 4H7z" fill="#eec147"/><path d="M9 7h3l-1.500 6h-3z" fill="#1c1c1c"/></svg></button>
            <button aria-label="Explorador"><svg viewBox="0 0 20 20"><path d="M1 2h6l2 2h10v13H1z" fill="#e9a920"/><path d="M1 6h18v12H1z" fill="#fbd04b"/><path d="M5 12h10v6H5z" fill="#1d7bc0"/></svg></button>
            <button aria-label="Tienda"><svg viewBox="0 0 20 20"><path d="M6 6V3h8v3" fill="none" stroke="#37a5e0" stroke-width="2"/><rect x="2" y="5" width="16" height="13" rx="2" fill="#f5f5f5"/><path d="M7 8h3v3H7z" fill="#e5532d"/><path d="M11 8h3v3h-3z" fill="#7fba00"/><path d="M7 12h3v3H7z" fill="#1597e0"/><path d="M11 12h3v3h-3z" fill="#f5b800"/></svg></button>
            <button class="open" aria-label="Brave"><svg viewBox="0 0 20 20"><path d="M6 2h8l3 3-1 9-6 5-6-5-1-9z" fill="#e43b26"/><path d="M6 5l4 1 4-1 1 3-2 4 1 1-4 3-4-3 1-1-2-4z" fill="#fff"/><path d="M7 8l2 1-1 2zM13 8l-2 1 1 2zM10 10l1 3H9z" fill="#e43b26"/></svg></button>
            <button class="current" aria-label="Gráficos"><svg viewBox="0 0 20 20"><rect x="1" y="1" width="18" height="18" rx="3" fill="#050505"/><path d="M3 6h6v8H6.500V9H3zM14 6h4l-4 8h-3.500z" fill="#fff"/><circle cx="11.500" cy="7.500" r="1.500" fill="#fff"/></svg></button>
            <button aria-label="Metatrader"><svg viewBox="0 0 20 20"><path d="M10 1l5 6-5 5-5-5z" fill="#72b64b"/><circle cx="5" cy="14" r="4" fill="#a8c832"/><circle cx="15" cy="14" r="4" fill="#2c83c4"/><circle cx="10" cy="11" r="5" fill="#e9c35f"/><circle cx="10" cy="11" r="3" fill="#f6ecc9"/></svg></button>
            <button class="open" aria-label="WhatsApp"><svg viewBox="0 0 20 20"><path d="M2 18l1.500-4A8 8 0 1 1 7 17z" fill="#1c1c1c" stroke="#3ecf6a" stroke-width="1.800"/><path d="M7 6c-2 3 3 8 6 7l1-2-2-1-1 1c-1 0-2.500-2-2-2.500l.5-1z" fill="#eee"/></svg><span class="count">3</span></button>
            <button aria-label="Notion"><svg viewBox="0 0 20 20"><path d="M3 3l11-1 4 3v12l-12 1-3-4z" fill="#111" stroke="#eee"/><rect x="6" y="6" width="11" height="11" rx="1" fill="#111" stroke="#eee"/><path d="M9 15V8l5 7V8" fill="none" stroke="#fff" stroke-width="1.500"/></svg></button>
            <button aria-label="Telegram"><svg viewBox="0 0 20 20"><circle cx="10" cy="10" r="8.500" fill="#35a6de"/><path d="M4 10l11-5-2 10-4-3-1 2-1-3z" fill="#fff"/></svg></button>
            <button class="open" aria-label="Chrome"><svg viewBox="0 0 20 20"><circle cx="10" cy="10" r="8.500" fill="#e8453c"/><path d="M10 10L2.600 5.800A8.500 8.500 0 0 0 9 18.500z" fill="#34a853"/><path d="M10 10L9 18.500A8.500 8.500 0 0 0 17.500 6z" fill="#fbc116"/><circle cx="10" cy="10" r="4" fill="#fff"/><circle cx="10" cy="10" r="3" fill="#3b7de9"/></svg></button>
            <button class="open" aria-label="OBS"><svg viewBox="0 0 20 20"><circle cx="9" cy="11" r="7.500" fill="#222" stroke="#ddd"/><path d="M9 5c-3 2-2 5 0 6 3 0 4 2 3 5M9 11c-1 3-4 3-6 1" fill="none" stroke="#ddd" stroke-width="1.500"/><circle cx="16" cy="4" r="3" fill="#e33"/></svg></button>
            <button class="open" aria-label="Spotify"><svg viewBox="0 0 20 20"><circle cx="10" cy="10" r="8.500" fill="#1ed760"/><path d="M5 7q5-2 10 1M6 10q4-1.500 8 1M6.500 13q3.500-1 6.500.7" fill="none" stroke="#101010" stroke-width="1.400"/></svg></button>
        </div>
        <div class="tray">
            <button aria-label="Ocultos"><svg class="ico small"><use href="#up"/></svg></button>
            <svg class="ico cloud" viewBox="0 0 18 18"><path d="M4 14a3 3 0 0 1 0-6 5 5 0 0 1 9-1 3.500 3.500 0 0 1 1 7z" fill="#dcdcdc" stroke="none"/></svg>
            <svg class="ico mic" viewBox="0 0 18 18"><rect x="7" y="3" width="4" height="8" rx="2"/><path d="M4.500 8.500a4.500 4.500 0 0 0 9 0M9 13v3"/></svg>
            <div class="lang"><span>ESP</span><span>LAA</span></div>
            <div class="net">
                <svg class="ico" viewBox="0 0 18 18"><path d="M3 8q6-5 12 0M5 10.500q4-3.500 8 0M7.500 13q1.500-1 3 0"/></svg>
                <svg class="ico" viewBox="0 0 18 18"><path d="M3 7h2.500L9 4v10l-3.500-3H3zM11 7q1 2 0 4M13 5.500q2.500 3.500 0 7"/></svg>
                <svg class="ico" viewBox="0 0 18 18"><rect x="2" y="6" width="13" height="7" rx="2" fill="#a4dba4" stroke="#a4dba4"/><path d="M16.500 8v3" stroke="#a4dba4"/><path d="M8 3v6M6 7l2 2 2-2" stroke="#fff"/></svg>
            </div>
            <div class="now"><span>22:06</span><span>19/01/2026</span></div>
        </div>
    </footer>
    <script src="script.js"></script>
</body>
</html>
```

FILE: styles.css
```css
* {
    margin: 0;
    padding: 0;
    box-sizing: border-box;
}

body {
    font-family: Lato, "Open Sans", sans-serif;
    font-size: 9px;
    color: #d6d6d6;
    background: #0f0f0f;
    height: 100vh;
    display: flex;
    flex-direction: column;
    overflow: hidden;
}

button {
    font: inherit;
    color: inherit;
    background: none;
    border: none;
    cursor: pointer;
    display: flex;
    align-items: center;
    justify-content: center;
    flex: none;
}

a {
    color: inherit;
    text-decoration: none;
}

hr {
    border: none;
    border-top: 1px solid #3c3c3c;
}

.sprite {
    display: none;
}

.ico {
    width: 18px;
    height: 18px;
    fill: none;
    stroke: currentColor;
    stroke-width: 1;
    flex: none;
}

.ico.slim {
    width: 14px;
}

.ico.small {
    width: 12px;
}

.pair {
    width: 14px;
    height: 14px;
    flex: none;
}

.flag {
    width: 8px;
    height: 9px;
    color: #3d74e8;
    flex: none;
}

.sep {
    width: 1px;
    height: 16px;
    background: #3c3c3c;
    flex: none;
}

.badge {
    position: absolute;
    background: #e0244e;
    color: #fff;
    font-size: 8px;
    line-height: 10px;
    border-radius: 6px;
    padding: 0 3px;
}

/* Window tabs */
.tabs {
    height: 24px;
    background: #3d3d3d;
    display: flex;
    align-items: stretch;
    padding-bottom: 1px;
    font-size: 8px;
    flex: none;
}

.tab {
    width: 157px;
    padding: 0 0 0 7px;
    display: flex;
    align-items: center;
    gap: 3px;
    border-right: 1px solid #505050;
    white-space: nowrap;
    overflow: hidden;
}

.tab.active {
    background: #0f0f0f;
}

.tab b,
.tab span {
    font-weight: bold;
    color: #e8e8e8;
}

.tab i {
    font-size: 9px;
    font-style: normal;
    color: #d22f50;
}

.tab em {
    font-style: normal;
    color: #d22f50;
}

.tab small {
    font-size: 8px;
    flex: 1;
    overflow: hidden;
    color: transparent;
    background: linear-gradient(90deg, #bbb, #444);
    background-clip: text;
}

.new-tab {
    width: 24px;
    padding-right: 4px;
    margin-left: 1px;
}

.window-controls {
    margin-left: auto;
    display: flex;
    gap: 15px;
}

.window-controls button {
    width: 18px;
}

.window-controls button:last-child {
    margin-right: 8px;
}

/* Top toolbar */
.toolbar {
    height: 28px;
    display: flex;
    align-items: center;
    font-weight: bold;
    padding: 0 3px 0 7px;
    flex: none;
}

.avatar {
    position: relative;
    width: 20px;
    margin-right: 8px;
}

.avatar svg {
    width: 20px;
    height: 20px;
}

.avatar .badge {
    left: 16px;
    top: -2px;
}

.symbol-search {
    display: flex;
    width: 102px;
    height: 18px;
    border: 1px solid #3c3c3c;
    border-radius: 9px;
    margin-right: 3px;
}

.symbol {
    flex: 1;
    justify-content: flex-start;
    padding-left: 1px;
    border-right: 1px solid #3c3c3c;
}

.gem {
    width: 34px;
}

.gem .ico {
    width: 14px;
}

.toolbar .sep {
    margin: 0 5px;
}

.frames {
    display: flex;
    font-weight: normal;
    color: #f0f0f0;
}

.frames button {
    height: 22px;
    padding: 0 4px;
    border-radius: 4px;
}

.frames .on {
    background: #2e2e2e;
}

.pad {
    padding: 0 1px;
}

.labelled {
    gap: 3px;
    margin-right: 8px;
}

.arrow {
    margin-right: 4px;
}

.dim {
    color: #777;
    margin-left: 6px;
}

.toolbar-end {
    margin-left: auto;
    display: flex;
    align-items: center;
    gap: 4px;
}

.layout-name {
    display: flex;
    flex-direction: column;
    align-items: center;
    line-height: 9px;
    padding-left: 2px;
}

.layout-name b {
    font-size: 8px;
}

.layout-name a {
    font-size: 7px;
    line-height: 8px;
    font-weight: normal;
    color: #3457e8;
}

.letter {
    width: 15px;
    height: 15px;
    border: 1px solid #3c3c3c;
    border-radius: 50%;
    font-size: 7px;
    font-weight: bold;
}

.letter.white {
    background: #fff;
    color: #111;
}

.tools {
    display: flex;
    gap: 7px;
}

.pill {
    height: 19px;
    padding: 0 7px;
    border: 1px solid #3c3c3c;
    border-radius: 10px;
    background: #000;
    margin-left: 2px;
}

.pill.light {
    background: #fff;
    color: #111;
}

/* Workspace */
.workspace {
    flex: 1;
    min-height: 0;
    display: flex;
    border-top: 1px solid #2e2e2e;
    border-bottom: 1px solid #4a4a4a;
}

.draw-tools {
    width: 34px;
    display: flex;
    flex-direction: column;
    align-items: center;
    gap: 2px;
    padding: 6px 0;
    color: #c6c6c6;
    flex: none;
}

.draw-tools button {
    width: 23px;
    height: 23px;
    border-radius: 4px;
}

.draw-tools hr {
    width: 24px;
    margin: 3px 0;
}

.draw-tools .on,
.rail .on {
    background: #2e2e2e;
}

.draw-tools .fav {
    margin-top: auto;
    margin-bottom: 6px;
    background: #f2f2f2;
    color: #222;
}

.center {
    flex: 1;
    min-width: 0;
    display: flex;
    flex-direction: column;
    border-left: 3px solid #262626;
}

.chart {
    flex: 1;
    min-height: 0;
    display: grid;
    grid-template-columns: 1fr 41px;
    grid-template-rows: 1fr 19px;
    background: #979aa3;
    color: #fff;
}

.plot {
    position: relative;
    min-height: 0;
    border-bottom: 1px solid #34363e;
}

.series {
    position: absolute;
    width: 100%;
    height: 100%;
}

.legend {
    position: relative;
    display: flex;
    align-items: center;
    gap: 8px;
    padding: 4px 0 0 5px;
}

.legend h1 {
    display: flex;
    align-items: center;
    gap: 1px;
    font-size: 11px;
    line-height: 14px;
    font-weight: bold;
}

.legend .status {
    width: 5px;
    height: 5px;
    border-radius: 50%;
    background: #22a57c;
}

.quotes {
    position: relative;
    display: flex;
    align-items: center;
    gap: 6px;
    padding: 4px 0 0 6px;
    font-size: 7px;
    color: #333;
}

.quotes button {
    flex-direction: column;
    min-width: 45px;
    height: 22px;
    padding: 0 5px;
    background: #fff;
    border-radius: 4px;
    line-height: 9px;
}

.quotes b {
    font-size: 9px;
    font-weight: normal;
}

.quotes sup {
    font-size: 7px;
    line-height: 1px;
    vertical-align: 2px;
}

.quotes .sell {
    color: #c5304c;
}

.quotes .buy {
    color: #3b4fc4;
}

.float-bar {
    position: absolute;
    left: 374px;
    top: 25px;
    width: 395px;
    height: 25px;
    display: flex;
    align-items: center;
    justify-content: space-between;
    padding: 0 3px;
    background: #1c1c1e;
    color: #d6d6d6;
    border-radius: 4px;
    box-shadow: 0 1px 3px #555;
}

.float-bar button {
    width: 18px;
}

.grip {
    width: 9px;
    font-size: 8px;
    color: #666;
}

.float-bar .ico {
    width: 17px;
    height: 17px;
}

.nav-buttons {
    position: absolute;
    left: 469px;
    bottom: 20px;
    display: flex;
    gap: 5px;
}

.nav-buttons button {
    width: 16px;
    height: 16px;
    background: #252628;
    border-radius: 3px;
    box-shadow: 0 1px 2px #666;
}

.nav-buttons .gap {
    margin-left: 6px;
}

.nav-buttons .ico {
    width: 10px;
    height: 10px;
    stroke-width: 2;
}

.event {
    position: absolute;
    bottom: 0;
    width: 16px;
    height: 16px;
}

.event.spark {
    left: 483px;
}

.event.euro {
    left: 597px;
}

.tv-mark {
    position: absolute;
    left: 7px;
    bottom: 7px;
    width: 22px;
    height: 14px;
    color: #000;
    overflow: visible;
}

/* Axes */
.price-axis {
    position: relative;
    display: flex;
    flex-direction: column;
    padding-bottom: 9px;
    border-left: 1px solid #34363e;
    border-bottom: 1px solid #34363e;
    font-size: 8px;
    font-weight: bold;
}

.price-axis select {
    width: 36px;
    height: 17px;
    margin: 3px 0 8px 2px;
    padding-left: 3px;
    border: none;
    border-radius: 2px;
    appearance: none;
    font-family: inherit;
    font-size: 8px;
    color: #222;
    background: linear-gradient(45deg, transparent 40%, #333 40% 65%, transparent 65%) 27px 7px / 3px 3px no-repeat, linear-gradient(-45deg, transparent 40%, #333 40% 65%, transparent 65%) 29px 7px / 3px 3px no-repeat, #fff;
}

.price-axis > span {
    flex: 1;
    display: flex;
    align-items: center;
    padding-left: 5px;
}

.tag {
    position: absolute;
    left: 0;
    right: 3px;
    height: 12px;
    line-height: 12px;
    padding-left: 5px;
    font-size: 8px;
    font-weight: bold;
    white-space: nowrap;
}

.tag.name {
    left: auto;
    right: 1px;
    padding: 0 2px;
}

.tag.high {
    top: 170px;
    background: #eaf2fb;
    color: #333;
    font-weight: normal;
}

.tag.last {
    top: 191px;
    background: #000;
}

.price-axis .tag.last {
    height: 20px;
    line-height: 10px;
}

.tag small {
    display: block;
    font-size: 8px;
}

.tag.cursor {
    top: 391px;
    height: 14px;
    line-height: 14px;
    background: #0d0d0d;
}

.tag.cursor .ico {
    width: 14px;
    height: 14px;
    display: block;
}

.tag.name.cursor {
    right: 0;
    padding: 0;
}

.time-axis {
    position: relative;
    display: flex;
    align-items: center;
    font-size: 8px;
    font-weight: bold;
    min-width: 0;
}

.time-axis > span {
    flex: 1;
    min-width: 0;
    text-align: center;
}

.time-axis .first {
    flex: none;
    width: 41px;
    margin-right: 20px;
}

.date-tag {
    position: absolute;
    left: 620px;
    top: 0;
    display: flex;
    justify-content: space-between;
    width: 91px;
    height: 16px;
    line-height: 18px;
    padding: 0 6px 0 5px;
    background: #0d0d0d;
}

.axis-settings {
    border-left: 1px solid #34363e;
    color: #34363e;
}

.axis-settings .ico {
    width: 12px;
}

/* Bottom bars */
.range-bar {
    height: 26px;
    display: flex;
    align-items: center;
    gap: 8px;
    padding: 0 7px 0 9px;
    flex: none;
}

.clock {
    margin-left: auto;
}

.panel-bar {
    height: 28px;
    display: flex;
    align-items: stretch;
    background: #1f1f1f;
    border-top: 2px solid #2e2e2e;
    padding-right: 4px;
    gap: 6px;
    flex: none;
}

.panel-tab {
    padding: 0 8px 0 5px;
    background: #0f0f0f;
}

.panel-icon {
    margin-left: auto;
}

/* Watchlist */
.watchlist {
    position: relative;
    width: 137px;
    display: flex;
    flex-direction: column;
    border-left: 3px solid #2a2c34;
    border-right: 1px solid #2e2e2e;
    flex: none;
}

.watch-head,
.watch-foot {
    display: flex;
    align-items: center;
    justify-content: space-between;
    font-weight: bold;
    padding: 0 8px 0 10px;
}

.watch-head {
    height: 33px;
}

.watch-head button,
.watch-foot button {
    gap: 4px;
}

.watch-lists {
    display: flex;
    gap: 4px;
    padding: 2px 10px 0;
}

.watch-lists .flag {
    width: 7px;
    height: 7px;
}

.teal .flag {
    color: #22dcc4;
}

.watchlist table {
    width: 100%;
    margin-top: 5px;
    border-collapse: separate;
    border-spacing: 0;
}

.watchlist th {
    height: 20px;
    font-weight: normal;
    color: #9a9a9a;
    text-align: left;
    padding: 0 10px;
    border-bottom: 1px solid #2e2e2e;
}

.watchlist th:last-child,
.watchlist td:last-child {
    text-align: right;
    padding-right: 10px;
}

.watchlist td {
    height: 20px;
    border-bottom: 1px solid #2e2e2e;
    color: #e0e0e0;
}

.watchlist td svg {
    vertical-align: middle;
    margin-right: 2px;
}

.watchlist thead::after {
    content: "";
    display: block;
    height: 5px;
}

.watchlist .selected td:first-child {
    border: 1px solid #c8c8c8;
    border-right: none;
    border-radius: 4px 0 0 4px;
}

.watchlist .selected td:last-child {
    border: 1px solid #c8c8c8;
    border-left: none;
    border-radius: 0 4px 4px 0;
}

.watchlist .neg {
    color: #d22f50;
}

.watchlist .pos {
    color: #20a67a;
}

.watch-foot {
    margin-top: auto;
    height: 34px;
    border-top: 2px solid #2e2e2e;
}

.collapse {
    position: absolute;
    left: -3px;
    bottom: 40px;
    width: 6px;
    height: 16px;
    border: 1px solid #3c3c3c;
    border-radius: 2px;
}

.collapse .ico {
    width: 5px;
}

/* Right rail */
.rail {
    width: 30px;
    display: flex;
    flex-direction: column;
    align-items: center;
    gap: 6px;
    padding: 4px 0;
    flex: none;
}

.rail button {
    position: relative;
    width: 25px;
    height: 25px;
    border-radius: 4px;
}

.rail .badge {
    right: -1px;
    top: -2px;
}

.rail .apps {
    width: 24px;
    height: 24px;
}

.rail-low {
    margin-top: auto;
    display: flex;
    flex-direction: column;
    align-items: center;
    gap: 5px;
}

.rail-low hr {
    width: 22px;
    margin: 1px 0;
}

/* Taskbar */
.taskbar {
    height: 31px;
    display: flex;
    align-items: center;
    justify-content: space-between;
    padding-bottom: 1px;
    background: #1c1c1c;
    font-family: "Open Sans", "Noto Sans", sans-serif;
    font-size: 8px;
    line-height: 11px;
    color: #eee;
    flex: none;
}

.weather {
    position: relative;
    display: flex;
    gap: 1px;
    padding-left: 11px;
    width: 359px;
}

.weather svg {
    width: 22px;
    height: 22px;
}

.weather-count {
    position: absolute;
    left: 24px;
    top: 0;
    color: #222;
}

.weather div,
.lang,
.now {
    display: flex;
    flex-direction: column;
}

.apps-row {
    display: flex;
    align-items: center;
    gap: 1px;
}

.apps-row button {
    position: relative;
    width: 28px;
    height: 28px;
    border-radius: 3px;
}

.apps-row button svg {
    width: 18px;
    height: 18px;
}

.search-box {
    display: flex;
    align-items: center;
    width: 146px;
    height: 22px;
    padding: 0 4px;
    margin: 0 2px;
    border: 1px solid #4a4a4a;
    border-radius: 11px;
    background: #343434;
}

.search-box input {
    flex: 1;
    min-width: 0;
    padding-left: 1px;
    border: none;
    background: none;
    font-family: inherit;
    font-size: 9px;
    color: #eee;
}

.search-box input::placeholder {
    color: #ccc;
}

.aurora {
    width: 30px;
    height: 18px;
}

.open::after,
.current::after {
    content: "";
    position: absolute;
    bottom: 0;
    width: 4px;
    height: 2px;
    border-radius: 1px;
    background: #9a9a9a;
}

.current {
    background: #2c2c2c;
}

.current::after {
    width: 10px;
    background: #d88090;
}

.count {
    position: absolute;
    right: 3px;
    top: 2px;
    width: 10px;
    line-height: 10px;
    border-radius: 5px;
    background: #e0655c;
    color: #222;
}

.tray {
    width: 359px;
    display: flex;
    align-items: center;
    justify-content: flex-end;
    gap: 8px;
    padding-right: 12px;
}

.tray .cloud,
.tray .net .ico {
    width: 15px;
}

.mic {
    color: #c98a7a;
    margin-right: 2px;
}

.net {
    display: flex;
    gap: 1px;
}

.now {
    text-align: right;
    margin-left: 2px;
}
```

FILE: script.js
```js
// x, high, body top, body bottom, low, u = up / d = down
const candles = `
38 515 532 542 543 u|41.3 515 525 533 535 u|45.3 517 523 525 527 u|49.3 520 523 542 546 d|53.3 535 537 541 545 u
65.3 612 614 615 615 u|69.7 599 614 615 615 u|73.7 474 532 615 615 u|77.3 448 451 532 540 u|81.7 362 385 451 451 u
86.7 376 385 402 418 d|90.3 397 401 479 499 d|94.3 372 384 479 479 u|98.3 296 308 384 384 u|102.3 308 308 330 343 d
106.3 317 329 371 374 d|110.7 343 370 371 382 u|114.7 355 365 371 379 u|118.7 348 365 401 401 d|122.7 380 397 400 402 u
126.7 395 397 398 431 d|131 397 397 412 413 d|135 412 412 414 418 d|139 414 414 428 428 d|143 384 384 428 428 u
147 381 384 385 407 d|151 362 362 385 385 u|155 355 355 362 362 u|159 348 348 355 355 u|163 340 343 348 348 u
167 322 322 343 343 u|171.3 313 321 322 327 u|175.7 297 303 323 325 u|179.7 301 303 338 340 d|183.3 336 338 351 362 d
187.3 339 346 351 357 u|191.3 328 346 349 354 d|195.3 345 348 364 374 d|199.3 337 347 364 368 u|203.3 273 293 348 348 u
207.3 290 293 324 330 d|211.3 321 323 375 387 d|215.3 356 363 375 387 u|220.3 356 363 384 407 d|224.3 362 384 411 414 d
228.3 375 384 410 410 u|232.7 350 351 384 384 u|236.3 345 352 422 432 d|240.3 412 422 439 460 d|244.3 376 382 439 439 u
248.3 363 377 382 388 u|252.3 352 371 378 385 u|256.3 363 371 386 389 d|260.3 374 385 389 392 d|265 357 377 389 389 u
269 377 377 397 397 d|273 390 392 397 397 u|277 370 372 392 392 u|281 364 366 372 372 u|285 344 345 366 366 u
289 333 343 345 345 u|293 323 343 346 346 d|297 345 346 349 372 d|301 335 338 349 349 u|305 317 319 338 338 u
309 312 317 319 327 u|313.3 308 317 325 341 d|317.3 317 325 335 343 d|321.3 302 304 335 335 u|325.3 298 304 305 327 u
329.3 267 272 305 305 u|333.3 260 272 297 302 d|337.3 282 296 311 311 d|341.3 301 311 328 328 d|345.3 271 286 328 332 u
349.3 258 267 287 295 u|354.3 237 241 267 270 u|358.3 240 241 259 273 d|362.3 242 259 275 275 d|366.3 262 273 274 278 u
370.3 266 273 274 283 u|374.3 241 244 273 273 u|378.3 238 242 244 263 u|382.3 229 233 242 242 u|386.3 228 233 237 238 d
390.3 232 237 254 255 d|394.3 249 254 262 264 d|399 242 244 262 262 u|403 243 245 246 248 u|407 243 243 259 259 d
411 253 255 259 259 u|415 255 255 270 270 d|419 258 261 270 270 u|423 257 260 261 262 u|427 250 251 261 261 u
431 250 251 252 253 u|435 252 252 260 265 d|439 245 247 260 260 u|443.3 243 246 248 251 u|447.3 246 247 267 276 d
451.3 239 245 247 250 u|455.3 240 244 245 248 u|459.3 243 244 250 250 d|463.3 243 250 270 270 d|467.3 269 270 282 282 d
471.3 273 282 288 292 d|475.3 280 286 288 291 u|479.3 283 286 305 305 d|483.3 293 304 305 307 d|488.3 304 304 320 328 d
492.3 277 280 320 326 u|496.3 262 270 281 284 u|500.3 268 270 277 286 d|504.3 273 277 285 287 d|508.3 257 259 285 287 u
512.3 253 259 275 277 d|516.3 255 256 275 278 u|520.3 243 244 257 257 u|524.3 243 244 255 257 d|528.3 248 249 255 258 u`;

const colors = { u: '#2f6bd0', d: '#08090c' };

document.getElementById('candleGroup').innerHTML = candles.trim().split(/[|\n]/).map(row => {
    const [x, high, top, bottom, low, dir] = row.trim().split(' ');
    return `<path d="M${x} ${high}V${low}" stroke="${colors[dir]}" stroke-width="0.8"/>` +
        `<rect x="${x - 1.7}" y="${top}" width="3.4" height="${bottom - top}" fill="${colors[dir]}"/>`;
}).join('');
```
